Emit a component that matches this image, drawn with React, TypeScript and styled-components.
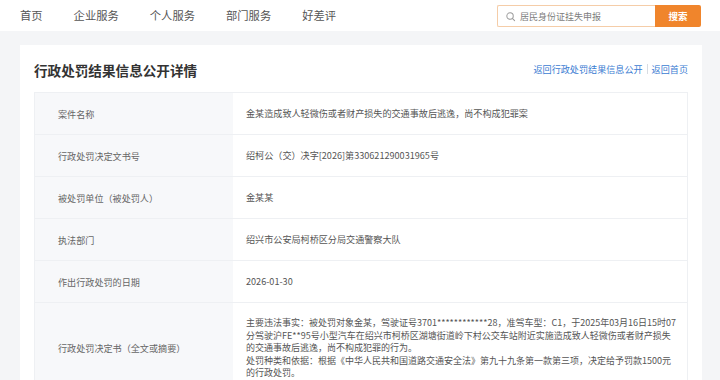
import React from "react";
import styled, { createGlobalStyle } from "styled-components";

const Global = createGlobalStyle`
  html, body { margin: 0; padding: 0; }
  body {
    background: #f4f5f7;
    font-family: "Noto Sans CJK SC", "Noto Sans", sans-serif;
    color: #333;
  }
  * { box-sizing: border-box; }
`;

const Page = styled.div`
  width: 720px;
  min-height: 380px;
  background: #f4f5f7;
`;

const TopBar = styled.header`
  height: 31px;
  background: #fff;
  display: flex;
  align-items: center;
  justify-content: space-between;
  padding: 0 19px 0 20px;
`;

const Nav = styled.nav`
  display: flex;
  align-items: center;
  gap: 31px;
`;

const NavItem = styled.a`
  font-size: 11.3px;
  color: #555;
  text-decoration: none;
  line-height: 1;
`;

const SearchForm = styled.div`
  display: flex;
  height: 22px;
  margin-top: 1px;
`;

const SearchBox = styled.div`
  width: 158px;
  display: flex;
  align-items: center;
  gap: 4px;
  padding-left: 7px;
  border: 1px solid #f5cda8;
  border-right: none;
  border-radius: 2px 0 0 2px;
  background: #fff;
`;

const Placeholder = styled.span`
  font-size: 9px;
  color: #7d7d7d;
`;

const SearchButton = styled.button`
  width: 46px;
  border: none;
  border-radius: 0 2px 2px 0;
  background: #f0852c;
  color: #fff;
  font-family: inherit;
  font-size: 9.5px;
  font-weight: 700;
  padding: 0;
`;

const Card = styled.main`
  margin: 14px 18px 0 20px;
  background: #fff;
  padding: 15px 14px 0 14px;
`;

const CardHead = styled.div`
  display: flex;
  align-items: center;
  justify-content: space-between;
  height: 20px;
  margin-bottom: 12px;
`;

const Title = styled.h1`
  margin: 0;
  font-size: 13.6px;
  font-weight: 700;
  color: #333;
  line-height: 20px;
`;

const Links = styled.div`
  display: flex;
  align-items: center;
  gap: 4px;
  font-size: 9.1px;
  margin-top: -2px;
`;

const BackLink = styled.a`
  color: #3b7cd2;
  text-decoration: none;
`;

const Sep = styled.span`
  width: 1px;
  height: 10px;
  background: #d8dce2;
`;

const Table = styled.div`
  display: grid;
  grid-template-columns: 198px 1fr;
  border: 1px solid #eef0f3;
  border-bottom: none;
`;

const Label = styled.div`
  background: #f7f8fa;
  min-height: 42px;
  display: flex;
  align-items: center;
  padding-left: 23px;
  font-size: 9.1px;
  color: #666;
  border-bottom: 1px solid #eef0f3;
`;

const Value = styled.div<{ $tall?: boolean }>`
  min-height: 42px;
  display: flex;
  align-items: center;
  padding: ${(p) => (p.$tall ? "14px 9px 14px 13px" : "0 14px 0 13px")};
  font-size: ${(p) => (p.$tall ? "9px" : "9.1px")};
  line-height: ${(p) => (p.$tall ? "12.5px" : "1.4")};
  color: #555;
  border-bottom: 1px solid #eef0f3;
`;

const Para = styled.div`
  display: flex;
  flex-direction: column;
`;

const SearchIcon = () => (
  <svg width="11" height="11" viewBox="0 0 24 24" fill="none" stroke="#9a9a9a" strokeWidth="2.2" strokeLinecap="round">
    <circle cx="11" cy="11" r="7" />
    <path d="M16.5 16.5L21 21" />
  </svg>
);

const rows: { label: string; value: React.ReactNode; tall?: boolean }[] = [
  { label: "案件名称", value: "金某造成致人轻微伤或者财产损失的交通事故后逃逸，尚不构成犯罪案" },
  { label: "行政处罚决定文书号", value: "绍柯公（交）决字[2026]第330621290031965号" },
  { label: "被处罚单位（被处罚人）", value: "金某某" },
  { label: "执法部门", value: "绍兴市公安局柯桥区分局交通警察大队" },
  { label: "作出行政处罚的日期", value: "2026-01-30" },
  {
    label: "行政处罚决定书（全文或摘要）",
    tall: true,
    value: (
      <Para>
        <span>
          主要违法事实：被处罚对象金某，驾驶证号3701************28，准驾车型：C1，于2025年03月16日15时07分驾驶沪FE**95号小型汽车在绍兴市柯桥区湖塘街道岭下村公交车站附近实施造成致人轻微伤或者财产损失的交通事故后逃逸，尚不构成犯罪的行为。
        </span>
        <span>
          处罚种类和依据：根据《中华人民共和国道路交通安全法》第九十九条第一款第三项，决定给予罚款1500元的行政处罚。
        </span>
      </Para>
    ),
  },
];

export default function App() {
  return (
    <Page>
      <Global />
      <TopBar>
        <Nav>
          <NavItem>首页</NavItem>
          <NavItem>企业服务</NavItem>
          <NavItem>个人服务</NavItem>
          <NavItem>部门服务</NavItem>
          <NavItem>好差评</NavItem>
        </Nav>
        <SearchForm>
          <SearchBox>
            <SearchIcon />
            <Placeholder>居民身份证挂失申报</Placeholder>
          </SearchBox>
          <SearchButton>搜索</SearchButton>
        </SearchForm>
      </TopBar>
      <Card>
        <CardHead>
          <Title>行政处罚结果信息公开详情</Title>
          <Links>
            <BackLink>返回行政处罚结果信息公开</BackLink>
            <Sep />
            <BackLink>返回首页</BackLink>
          </Links>
        </CardHead>
        <Table>
          {rows.map((r) => (
            <React.Fragment key={r.label}>
              <Label>{r.label}</Label>
              <Value $tall={r.tall}>{r.value}</Value>
            </React.Fragment>
          ))}
        </Table>
      </Card>
    </Page>
  );
}
